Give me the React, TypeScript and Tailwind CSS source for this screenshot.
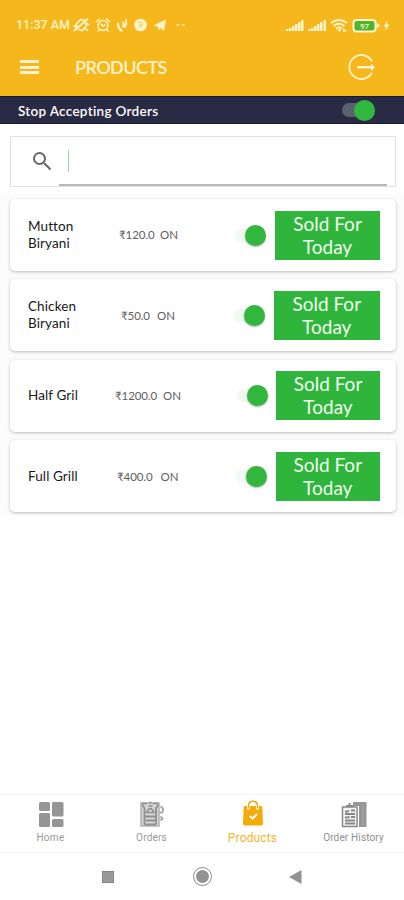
import { useState } from 'react';
import clsx from 'clsx';

const products = [
  { name: 'Mutton Biryani', price: '120.0', cols: 'grid-cols-[91px_41px_74px_41px_105px]' },
  { name: 'Chicken Biryani', price: '50.0', cols: 'grid-cols-[93px_36px_76px_40.5px_106.5px]' },
  { name: 'Half Gril', price: '1200.0', cols: 'grid-cols-[87px_48px_73px_40px_104px]' },
  { name: 'Full Grill', price: '400.0', cols: 'grid-cols-[89px_43.5px_74.5px_40.5px_104.5px]' },
];

function StatusBar() {
  return (
    <div className="flex h-12 items-center pt-[2px] pl-4 text-[#fff3c9]">
      <span className="w-[56px] font-['Roboto'] text-[12.5px] leading-4 font-medium whitespace-nowrap">11:37 AM</span>
      <svg width="116" height="20" viewBox="0 0 116 20" fill="none" stroke="currentColor" strokeWidth="1.5" strokeLinecap="round">
        {/* vibrate / muted */}
        <path d="M5 12.500 4 9.500 8.500 4.500 13 5.500M6.500 14.500 10 15.500 14.500 11 13.500 8M2.500 15.500 15.500 4M2 11l1.500 1M15 8.500l1.500 1M13.500 14l2 1M7.500 11.500l3.500-3.500" strokeWidth="1.700" />
        {/* alarm */}
        <circle cx="31" cy="10.500" r="5" />
        <path d="M29 9l2 2 2-1M24.500 6.500l3-2.500M37.500 6.500l-3-2.500M27 15l-1 1M35 15l1 1" />
        <path d="M46 9q0 4.500 3.500 6.500" strokeWidth="2.400" />
        <path d="M51 7.500q1.500 2 0 4M54 5q1 3.500-1 7" strokeWidth="2" />
        <circle cx="68.500" cy="10" r="6.300" fill="currentColor" stroke="none" />
        <path d="M66.500 7.500q4-1 4 1.500t-3.500 3M67.500 10h3" stroke="#f5c95a" strokeWidth="1" />
        <path d="M81.500 10.500 94 4.500 92 16 88.500 13 87 15.500 86 12Z" fill="currentColor" stroke="none" />
        <path d="M105 10h1.500M110.500 10h1.500" strokeWidth="1.500" />
      </svg>
      <svg className="ml-[97px]" width="108" height="20" viewBox="0 0 108 20" fill="currentColor">
        <path d="M1 16v-2h2.500v2zM4 16v-3h2.500v3zM7 16v-5h2.500v5zM10 16V9h2.500v7zM13 16V7h2.500v9zM16 16V5h2.500v11zM23 16v-2h2.500v2zM26 16v-3h2.500v3zM29 16v-5h2.500v5zM32 16V9h2.500v7zM35 16V7h2.500v9zM38.500 16V5H41v11z" />
        <g fill="none" stroke="currentColor" strokeWidth="2">
          <path d="M46 8q8-6 16 0M48.500 11q5.500-4.500 11 0M51 13.500q3-2.500 6 0" />
        </g>
        <path d="m52 14 2.500 3 2-3zM58 13l4 3.500-4 .5z" />
        <rect x="68.500" y="5" width="22" height="11.500" rx="3" fill="#4fb52c" stroke="currentColor" strokeWidth="2" />
        <path d="M91.500 7.500l3.500 3.200-3.500 3.200z" />
        <text x="79.500" y="13.500" textAnchor="middle" fontFamily="Roboto" fontWeight="500" fontSize="8">97</text>
        <path d="M102.500 5.500 98.500 11.500h2.500l-1 4.500 4.500-6.500h-2.500z" />
      </svg>
    </div>
  );
}

function Header() {
  return (
    <header className="h-24 bg-[#f5b71c]">
      <StatusBar />
      <div className="flex h-[38px] items-center pl-5 text-[#fff3cf]">
        <div className="flex w-[55px] flex-col gap-[2.5px]">
          <span className="h-[3px] w-[19px] bg-current" />
          <span className="h-[3px] w-[19px] bg-current" />
          <span className="h-[3px] w-[19px] bg-current" />
        </div>
        <h1 className="w-[273px] text-[18px] leading-5 font-semibold tracking-[-0.55px]">PRODUCTS</h1>
        <svg width="30" height="28" viewBox="0 0 30 28" fill="none" stroke="currentColor" strokeWidth="1.800">
          <path d="M24 8.500A12 12 0 1 0 24 19.500" />
          <path d="M9 14.200H24" strokeWidth="2.400" />
          <path d="m23 10.500 4 3.700-4 3.700z" fill="currentColor" stroke="none" />
        </svg>
      </div>
    </header>
  );
}

function NavIcon({ name }: { name: string }) {
  if (name === 'Home') {
    return (
      <svg width="28" height="28" viewBox="0 0 28 28" fill="#959595">
        <rect x="2" y="2" width="11" height="9" rx="1.500" />
        <rect x="15" y="2" width="11.500" height="14.500" rx="1.500" />
        <rect x="2" y="13" width="11" height="14" rx="1.500" />
        <rect x="15" y="19" width="11.500" height="8" rx="1.500" />
      </svg>
    );
  }
  if (name === 'Orders') {
    return (
      <svg width="28" height="28" viewBox="0 0 28 28" fill="none" stroke="#8f8f8f" strokeWidth="1.500">
        <rect x="3" y="3" width="18" height="23" fill="#d5d5d5" stroke="#b0b0b0" />
        <path d="M6.500 24.500V8L4 4.500M18 24.500V8l2.500-3.500M6.500 24.500H18M7 16.500h10.500M8 20.500h9" strokeWidth="1.800" />
        <path d="M8.500 12.500q3.800-8 7.500 0zM4 3.500h5M15 3.500h5M11 2.500h2.500M10.500 6h4" />
        <path d="M22.500 6.500q3 1 2.500 4t-3 2M22.500 16.500l2 2-2 2" strokeWidth="2" stroke="#aaa" />
      </svg>
    );
  }
  if (name === 'Products') {
    return (
      <svg width="28" height="28" viewBox="0 0 28 28" fill="none">
        <path d="M6 6h16q1.200 0 1.300 1.200L24 23.500q0 2-2 2H6q-2 0-2-2L4.700 7.200Q4.800 6 6 6z" fill="#f3ab09" />
        <path d="M9.500 9.500V6q0-4.500 4.500-4.500t4.500 4.500v3.500" stroke="#fff" strokeWidth="3" />
        <path d="M9.500 8.500V6q0-4.700 4.500-4.700t4.500 4.700v2.500" stroke="#f3ab09" strokeWidth="1.500" />
        <path d="m11 16 2.500 2.500 4.500-4.500" stroke="#fff" strokeWidth="2" />
      </svg>
    );
  }
  return (
    <svg width="28" height="28" viewBox="0 0 28 28" fill="none" stroke="#888" strokeWidth="1.500">
      <path d="M13 2h13.500v25H19V6h-6z" fill="#969696" stroke="none" />
      <path d="M23 4v21" stroke="#aaa" strokeWidth="1" />
      <path d="M2.500 7h14.500v19.500H2.500z" fill="#f4f4f4" />
      <path d="M5 11.500h2.500l1.500-1M11 10.500h4M5 14h10M5 17.500h3l1.500-1M11 17h4M5 20.500h10M5 23.500h10M6 6h7.500M9.500 3v2" strokeWidth="1.900" />
    </svg>
  );
}

const tabs = [
  { label: 'Home', text: 'text-[10px] tracking-[0.3px] text-[#999]' },
  { label: 'Orders', text: 'text-[10px] tracking-[0.2px] text-[#999]' },
  { label: 'Products', text: 'text-[12px] tracking-[0.15px] text-[#f3b42a]' },
  { label: 'Order History', text: 'text-[10px] tracking-[0.15px] text-[#8e8e8e]' },
];

export default function App() {
  const [search, setSearch] = useState('');
  const [active, setActive] = useState('Products');

  return (
    <div className="flex h-[900px] w-[404px] flex-col overflow-hidden bg-white font-['Lato','Noto_Sans',sans-serif]">
      <Header />
      <div className="flex h-7 items-center justify-between border-y border-[#171733] bg-[#292a43] pr-[29px] pl-[18px]">
        <span className="mt-px text-[13.5px] leading-4 font-semibold tracking-[0.3px] text-white">Stop Accepting Orders</span>
        <div className="flex h-[14px] w-[33px] items-center justify-end rounded-full bg-[#59616a]">
          <span className="size-[21px] shrink-0 rounded-full bg-[#31b63e]" />
        </div>
      </div>

      <main className="flex-1 pt-3 pr-2 pl-[10px]">
        <div className="flex h-[51px] border border-[#e0e0e0] pr-2 pl-[21px]">
          <svg className="mt-[14px] mr-[7px]" width="20" height="20" viewBox="0 0 20 20" fill="none" stroke="#666" strokeWidth="2">
            <circle cx="7.500" cy="7.500" r="5.500" />
            <path d="m12 12 6.500 6.500" />
          </svg>
          <label className="flex flex-1 items-center border-b-2 border-[#b9b9b9] pl-[9px]">
            {search === '' && <span className="h-[22px] w-px bg-[#8bd899]" />}
            <input
              value={search}
              onChange={(e) => setSearch(e.target.value)}
              className="min-w-0 flex-1 bg-transparent text-sm outline-none"
            />
          </label>
        </div>

        <div className="-mr-2 -ml-[10px] mt-[7px] flex flex-col gap-[8.4px] bg-[#fbfbfb] pt-[5px] pr-2 pb-1 pl-[10px]">
          {products.map((product) => (
            <div
              key={product.name}
              className={clsx('grid h-[72px] items-center rounded-[5px] bg-white pl-[18px] shadow-[0_1px_3px_rgba(0,0,0,0.25)]', product.cols)}
            >
              <span className="w-[58px] text-[13.5px] leading-[17px] tracking-[0.1px] text-[#171717]">{product.name}</span>
              <span className="text-[11.5px] tracking-[-0.1px] whitespace-nowrap text-[#606060]">₹{product.price}</span>
              <span className="text-[11.5px] text-[#606060]">ON</span>
              <div className="flex h-[13px] w-[32px] items-center justify-end rounded-full bg-gradient-to-r from-[#f4fbf4] to-[#ddf2df]">
                <span className="size-[21px] shrink-0 rounded-full bg-[#31b63e] shadow-[0_1px_2px_rgba(0,0,0,0.3)]" />
              </div>
              <button className="h-[49px] bg-[#2fb53c] pb-px text-[19px] leading-[23px] text-[#f0fff0]">
                Sold For
                <br />
                Today
              </button>
            </div>
          ))}
        </div>
      </main>

      <nav className="grid h-[59px] grid-cols-4 border-t border-b border-[#f4f4f4] font-['Roboto']">
        {tabs.map((tab) => (
          <button key={tab.label} onClick={() => setActive(tab.label)} aria-current={active === tab.label} className="flex flex-col items-center pt-[5px]">
            <NavIcon name={tab.label} />
            <span className={clsx('mt-[2px] leading-4 whitespace-nowrap', tab.text)}>{tab.label}</span>
          </button>
        ))}
      </nav>
      <div className="flex h-[47px] items-center pl-[102px]">
        <span className="size-[12px] border border-[#858585] bg-[#999]" />
        <span className="ml-[79px] flex size-[19px] items-center justify-center rounded-full border border-[#888]">
          <span className="size-[13px] rounded-full bg-[#929292]" />
        </span>
        <svg className="ml-[77px]" width="13" height="14" viewBox="0 0 13 14">
          <path d="M0 7 12.500 0v14z" fill="#929292" />
        </svg>
      </div>
    </div>
  );
}
